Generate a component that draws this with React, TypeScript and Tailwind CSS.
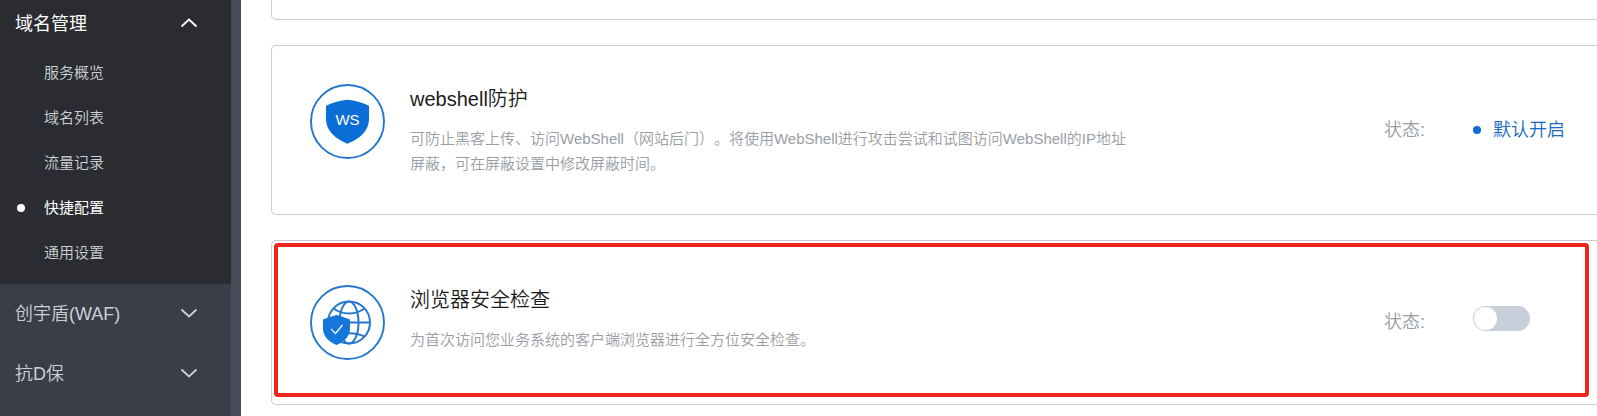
import React, { useState } from 'react';

const subItems = ['服务概览', '域名列表', '流量记录', '快捷配置', '通用设置'];

const groups = ['创宇盾(WAF)', '抗D保'];

const Chevron = ({ up = false }: { up?: boolean }) => (
  <svg width="18" height="12" viewBox="0 0 18 12" fill="none" stroke="currentColor" strokeWidth="1.8">
    {up ? <path d="M1.5 8.5 L9 1.5 L16.5 8.5" /> : <path d="M1.5 1.5 L9 8.5 L16.5 1.5" />}
  </svg>
);

const WebshellIcon = () => (
  <svg width="76" height="76" viewBox="0 0 76 76" fill="none" className="shrink-0">
    <circle cx="37.5" cy="37.5" r="36.5" stroke="#2577cd" strokeWidth="1.9" />
    <path
      d="M37.5 15.8 C45 16.2 52 18.5 59 21.8 V35 C59 47 49.5 55 37.5 59.7 C25.5 55 16 47 16 35 V21.8 C23 18.5 30 16.2 37.5 15.8 Z"
      fill="#0b6dd6"
    />
    <text x="37.5" y="41" textAnchor="middle" fontSize="15" fill="#fff" fontFamily="Liberation Sans, sans-serif">
      WS
    </text>
  </svg>
);

const BrowserIcon = () => (
  <svg width="76" height="76" viewBox="0 0 76 76" fill="none" className="shrink-0">
    <circle cx="37.5" cy="37.5" r="36.5" stroke="#2577cd" strokeWidth="1.9" />
    <g stroke="#2577cd" strokeWidth="2">
      <circle cx="39" cy="37.5" r="21" />
      <ellipse cx="39" cy="37.5" rx="9.5" ry="21" />
      <path d="M18 37.5 H60" />
      <path d="M23.5 23.5 C32 30 46 30 54.5 23.5 M23.5 51.5 C32 47 46 47 54.5 51.5" />
    </g>
    <path
      d="M26.5 30 C31 31 35.5 32.5 40 34.5 V43.5 C40 51.5 34 57 26.5 60 C19 57 13 51.5 13 43.5 V34.5 C17.5 32.5 22 31 26.5 30 Z"
      fill="#1577da"
    />
    <path d="M21 44 L25.5 48.5 L32.5 40" stroke="#fff" strokeWidth="1.2" />
  </svg>
);

const Sidebar = () => (
  <aside className="flex w-[241px] shrink-0 bg-[#464c58]">
    <nav className="w-[231px] bg-[#3a3e48] text-[#cdd0d4]">
      <div className="bg-[#2b2c31] pb-2">
        <button className="flex h-[51px] w-full items-center justify-between pr-[33px] pb-1 pl-[15px] text-lg font-normal text-white">
          域名管理
          <Chevron up />
        </button>
        <ul>
          {subItems.map((item) => {
            const active = item === '快捷配置';
            return (
              <li key={item}>
                <a
                  href="#"
                  className={`flex h-[45px] items-center pl-[17px] text-[15px] ${active ? 'font-normal text-white' : ''}`}
                >
                  <span className={`mr-[19px] mb-0.5 h-2 w-2 rounded-full ${active ? 'bg-white' : ''}`} />
                  {item}
                </a>
              </li>
            );
          })}
        </ul>
      </div>
      {groups.map((label) => (
        <button key={label} className="flex h-[60px] w-full items-center justify-between pr-[33px] pl-[15px] text-lg">
          {label}
          <Chevron />
        </button>
      ))}
    </nav>
  </aside>
);

interface CardProps {
  icon: React.ReactNode;
  title: string;
  text: string;
  className: string;
  children: React.ReactNode;
}

const Card = ({ icon, title, text, className, children }: CardProps) => (
  <section className={`relative flex rounded-l-[5px] border border-r-0 border-[#c9cdd2] pl-[38px] ${className}`}>
    {icon}
    <div className="ml-6 w-[720px]">
      <h2 className="text-xl leading-[30px] text-[#1c1c1c]">{title}</h2>
      <p className="mt-3 text-[15px] leading-[25px] text-[#999ea5] [text-spacing-trim:space-all]">{text}</p>
    </div>
    {children}
  </section>
);

export default function App() {
  const [checked, setChecked] = useState(false);

  return (
    <div className="flex min-h-screen overflow-hidden bg-white font-['Liberation_Sans','Noto_Sans_CJK_SC',sans-serif] font-[350]">
      <Sidebar />
      <main className="flex min-w-0 flex-1 flex-col gap-[25px] pl-[30px]">
        <div className="h-5 rounded-bl-[5px] border-b border-l border-[#c9cdd2]" />

        <Card
          icon={<WebshellIcon />}
          title="webshell防护"
          text="可防止黑客上传、访问WebShell（网站后门）。将使用WebShell进行攻击尝试和试图访问WebShell的IP地址屏蔽，可在屏蔽设置中修改屏蔽时间。"
          className="pt-[38px] pb-[38px]"
        >
          <div className="ml-auto flex h-[92px] w-[213px] items-center text-lg text-[#999ea5]">
            <span className="w-[89px]">状态:</span>
            <span className="mr-3 h-2 w-2 rounded-full bg-[#0b6dd6]" />
            <span className="text-[#1968c0]">默认开启</span>
          </div>
        </Card>

        <Card
          icon={<BrowserIcon />}
          title="浏览器安全检查"
          text="为首次访问您业务系统的客户端浏览器进行全方位安全检查。"
          className="pt-11 pb-[43px]"
        >
          <div className="ml-auto flex h-[74px] w-[213px] items-center text-lg text-[#999ea5]">
            <label htmlFor="browser-check" className="w-[89px]">
              状态:
            </label>
            <input
              id="browser-check"
              type="checkbox"
              role="switch"
              checked={checked}
              onChange={(e) => setChecked(e.target.checked)}
              className="mb-2 h-[25px] w-[57px] cursor-pointer appearance-none rounded-full bg-[#c9cfda] p-px before:block before:h-[23px] before:w-[23px] before:rounded-full before:bg-white checked:bg-[#0b6dd6] checked:before:ml-8"
            />
          </div>
          <div className="pointer-events-none absolute top-0.5 right-2 bottom-[7px] left-0.5 rounded-sm border-4 border-[#ec261b]" />
        </Card>
      </main>
    </div>
  );
}
